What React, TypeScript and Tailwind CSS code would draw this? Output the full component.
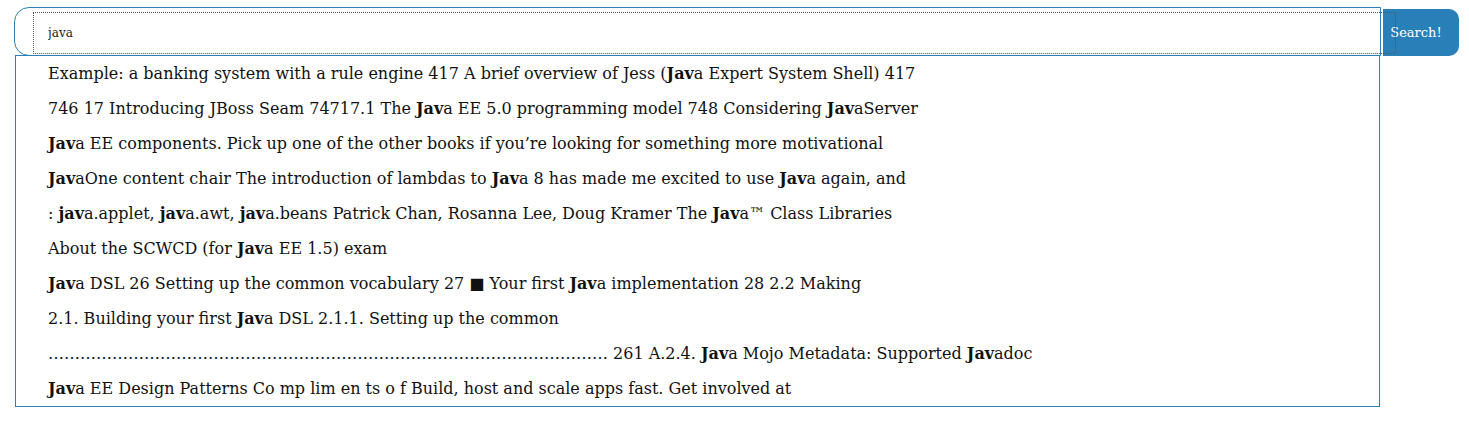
import React from 'react'

type Part = string | { b: string }

const rows: Part[][] = [
  ['Example: a banking system with a rule engine 417 A brief overview of Jess (', { b: 'Jav' }, 'a Expert System Shell) 417'],
  ['746 17 Introducing JBoss Seam 74717.1 The ', { b: 'Jav' }, 'a EE 5.0 programming model 748 Considering ', { b: 'Jav' }, 'aServer'],
  [{ b: 'Jav' }, 'a EE components. Pick up one of the other books if you’re looking for something more motivational'],
  [{ b: 'Jav' }, 'aOne content chair The introduction of lambdas to ', { b: 'Jav' }, 'a 8 has made me excited to use ', { b: 'Jav' }, 'a again, and'],
  [': ', { b: 'jav' }, 'a.applet, ', { b: 'jav' }, 'a.awt, ', { b: 'jav' }, 'a.beans Patrick Chan, Rosanna Lee, Doug Kramer The ', { b: 'Jav' }, 'a™ Class Libraries'],
  ['About the SCWCD (for ', { b: 'Jav' }, 'a EE 1.5) exam'],
  [{ b: 'Jav' }, 'a DSL 26 Setting up the common vocabulary 27 ■ Your first ', { b: 'Jav' }, 'a implementation 28 2.2 Making'],
  ['2.1. Building your first ', { b: 'Jav' }, 'a DSL 2.1.1. Setting up the common'],
  ['…'.repeat(35) + ' 261 A.2.4. ', { b: 'Jav' }, 'a Mojo Metadata: Supported ', { b: 'Jav' }, 'adoc'],
  [{ b: 'Jav' }, 'a EE Design Patterns Co mp lim en ts o f Build, host and scale apps fast. Get involved at'],
]

export default function App() {
  return (
    <div className="w-[1469px] h-[436px] bg-white pt-[7px] pl-[14px] font-['DejaVu_Serif',serif]">
      <form className="flex items-start" onSubmit={(e) => e.preventDefault()}>
        <div className="w-[1367px] h-[49px] border border-[#2980b9] rounded-l-[15px] pl-[18px] pt-[4px]">
          <input
            defaultValue="java"
            className="relative z-10 w-[1363px] h-[42px] bg-transparent border border-dotted border-[#555] rounded-r-[3px] pl-[14px] text-[12px] text-[#222] outline-none font-['DejaVu_Serif',serif]"
          />
        </div>
        <button
          type="submit"
          className="ml-[2px] mt-[2px] w-[76px] h-[47px] bg-[#2980b9] rounded-r-[10px] text-white text-[13px] pr-[10px] font-['DejaVu_Serif',serif]"
        >
          Search!
        </button>
      </form>
      <ul className="ml-[1px] -mt-px w-[1365px] border border-[#2980b9] bg-white">
        {rows.map((parts, i) => (
          <li key={i} className="h-[35px] flex items-center pl-[32px] text-[16px] text-[#111] whitespace-pre">
            {parts.map((p, j) =>
              typeof p === 'string' ? <span key={j}>{p}</span> : <b key={j}>{p.b}</b>
            )}
          </li>
        ))}
      </ul>
    </div>
  )
}
